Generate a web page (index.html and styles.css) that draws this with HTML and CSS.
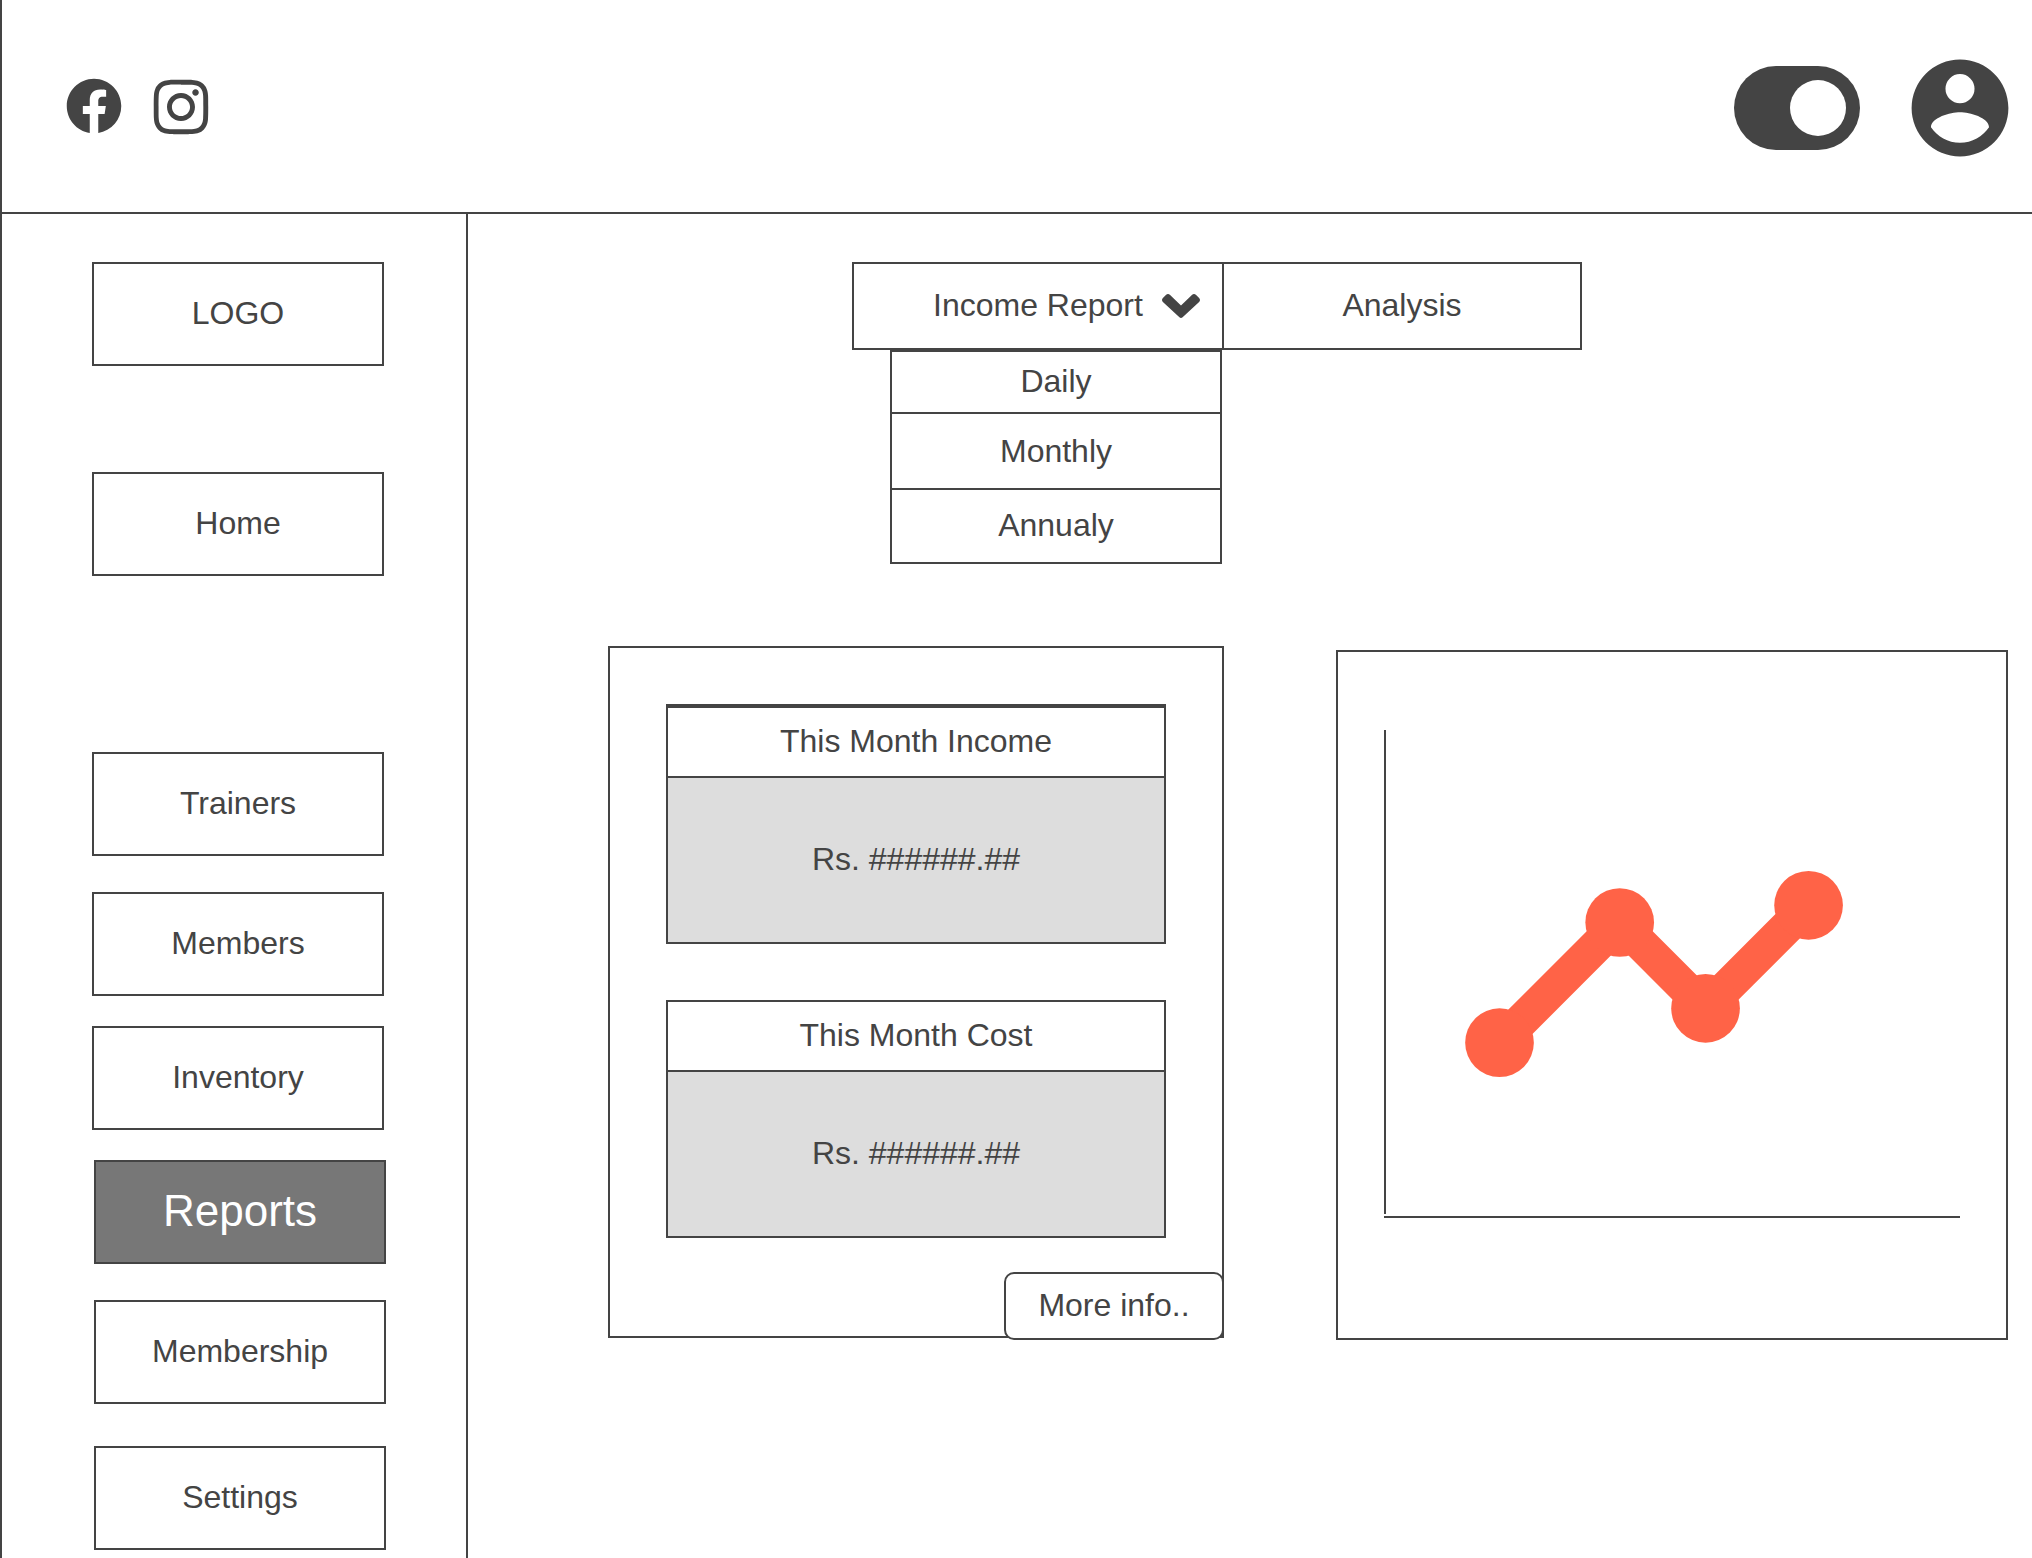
FILE: index.html
```html
<!DOCTYPE html>
<html lang="en">
<head>
<meta charset="utf-8">
<title>Reports</title>
<link rel="stylesheet" href="styles.css">
</head>
<body>
<div class="app">
  <header class="topbar">
    <div class="social">
      <svg class="icon-facebook" viewBox="1.72 1.78 20.55 20.55"><path d="M12 2.04C6.5 2.04 2 6.53 2 12.06C2 17.06 5.66 21.21 10.44 21.96V14.96H7.9V12.06H10.44V9.85C10.44 7.34 11.93 5.96 14.22 5.96C15.31 5.96 16.45 6.15 16.45 6.15V8.62H15.19C13.95 8.62 13.56 9.39 13.56 10.18V12.06H16.34L15.89 14.96H13.56V21.96A10 10 0 0 0 22 12.06C22 6.53 17.5 2.04 12 2.04Z"/></svg>
      <svg class="icon-instagram" viewBox="-0.33 -0.33 24.67 24.67"><path d="M12 0C8.74 0 8.333.015 7.053.072 5.775.132 4.905.333 4.14.63c-.789.306-1.459.717-2.126 1.384S.935 3.35.63 4.14C.333 4.905.131 5.775.072 7.053.012 8.333 0 8.74 0 12s.015 3.667.072 4.947c.06 1.277.261 2.148.558 2.913.306.788.717 1.459 1.384 2.126.667.666 1.336 1.079 2.126 1.384.766.296 1.636.499 2.913.558C8.333 23.988 8.74 24 12 24s3.667-.015 4.947-.072c1.277-.06 2.148-.262 2.913-.558.788-.306 1.459-.718 2.126-1.384.666-.667 1.079-1.335 1.384-2.126.296-.765.499-1.636.558-2.913.06-1.28.072-1.687.072-4.947s-.015-3.667-.072-4.947c-.06-1.277-.262-2.149-.558-2.913-.306-.789-.718-1.459-1.384-2.126C21.319 1.347 20.651.935 19.86.63c-.765-.297-1.636-.499-2.913-.558C15.667.012 15.26 0 12 0zm0 2.16c3.203 0 3.585.016 4.85.071 1.17.055 1.805.249 2.227.415.562.217.96.477 1.382.896.419.42.679.819.896 1.381.164.422.36 1.057.413 2.227.057 1.266.07 1.646.07 4.85s-.015 3.585-.074 4.85c-.061 1.17-.256 1.805-.421 2.227-.224.562-.479.96-.899 1.382-.419.419-.824.679-1.38.896-.42.164-1.065.36-2.235.413-1.274.057-1.649.07-4.859.07-3.211 0-3.586-.015-4.859-.074-1.171-.061-1.816-.256-2.236-.421-.569-.224-.96-.479-1.379-.899-.421-.419-.69-.824-.9-1.38-.165-.42-.359-1.065-.42-2.235-.045-1.26-.061-1.649-.061-4.844 0-3.196.016-3.586.061-4.861.061-1.17.255-1.814.42-2.234.21-.57.479-.96.9-1.381.419-.419.81-.689 1.379-.898.42-.166 1.051-.361 2.221-.421 1.275-.045 1.65-.06 4.859-.06l.045.03zm0 3.678c-3.405 0-6.162 2.76-6.162 6.162 0 3.405 2.76 6.162 6.162 6.162 3.405 0 6.162-2.76 6.162-6.162 0-3.405-2.76-6.162-6.162-6.162zM12 16c-2.21 0-4-1.79-4-4s1.79-4 4-4 4 1.79 4 4-1.79 4-4 4zm7.846-10.405c0 .795-.646 1.44-1.44 1.44-.795 0-1.44-.646-1.44-1.44 0-.794.646-1.439 1.44-1.439.793-.001 1.44.645 1.44 1.439z"/></svg>
    </div>
    <div class="account">
      <div class="toggle"><div class="knob"></div></div>
      <svg class="icon-account" viewBox="1.875 1.875 20.25 20.25"><path d="M12,19.2C9.5,19.2 7.29,17.92 6,16C6.03,14 10,12.9 12,12.9C14,12.9 17.97,14 18,16C16.71,17.92 14.5,19.2 12,19.2M12,5A3,3 0 0,1 15,8A3,3 0 0,1 12,11A3,3 0 0,1 9,8A3,3 0 0,1 12,5M12,2A10,10 0 0,0 2,12A10,10 0 0,0 12,22A10,10 0 0,0 22,12C22,6.47 17.5,2 12,2Z"/></svg>
    </div>
  </header>
  <div class="body">
    <nav class="sidebar">
      <a class="item logo">LOGO</a>
      <a class="item home">Home</a>
      <a class="item trainers">Trainers</a>
      <a class="item members">Members</a>
      <a class="item inventory">Inventory</a>
      <a class="item shifted reports">Reports</a>
      <a class="item shifted membership">Membership</a>
      <a class="item shifted settings">Settings</a>
    </nav>
    <main class="content">
      <div class="tabs">
        <div class="tab income">Income Report
          <svg class="chevron" viewBox="0 0 38 24"><path d="M19 11.6L8.1 1Q6-.9 3.9 1L.9 4Q-.9 6 .9 8L17.4 23.2Q19 24.6 20.6 23.2L37.1 8Q38.9 6 37.1 4L34.1 1Q32-.9 29.9 1Z"/></svg>
        </div>
        <div class="tab analysis">Analysis</div>
      </div>
      <div class="dropdown">
        <div class="option daily">Daily</div>
        <div class="option monthly">Monthly</div>
        <div class="option annual">Annualy</div>
      </div>
      <div class="panels">
        <section class="summary">
          <div class="stat first">
            <div class="stat-title">This Month Income</div>
            <div class="stat-value">Rs. ######.##</div>
          </div>
          <div class="stat">
            <div class="stat-title">This Month Cost</div>
            <div class="stat-value">Rs. ######.##</div>
          </div>
          <button class="more">More info..</button>
        </section>
        <section class="chart">
          <svg class="plot" viewBox="0 0 668 686">
            <path class="axis" d="M47 78V562M46 565H622"/>
            <g transform="translate(110 81.6) scale(17.17)">
              <path class="trend" d="M3 18L10 11L15 16L21 10"/>
              <circle cx="3" cy="18" r="2"/>
              <circle cx="10" cy="11" r="2"/>
              <circle cx="15" cy="16" r="2"/>
              <circle cx="21" cy="10" r="2"/>
            </g>
          </svg>
        </section>
      </div>
    </main>
  </div>
</div>
</body>
</html>
```
FILE: styles.css
```css
* {
  box-sizing: border-box;
}

body {
  margin: 0;
  background: #fff;
  color: #444;
  font: 32px/36px "Liberation Sans", Arial, sans-serif;
}

svg {
  display: block;
  fill: #444;
}

.app {
  display: flex;
  flex-direction: column;
  height: 1558px;
  overflow: hidden;
  border-left: 2px solid #444;
}

.topbar {
  display: flex;
  justify-content: space-between;
  height: 214px;
  border-bottom: 2px solid #444;
  padding: 0 23px 0 64px;
}

.social {
  display: flex;
  gap: 31px;
}

.icon-facebook {
  width: 56px;
  height: 56px;
  margin-top: 78px;
}

.icon-instagram {
  width: 56px;
  height: 56px;
  margin-top: 79px;
}

.account {
  display: flex;
  align-items: center;
  gap: 51px;
  padding-top: 4px;
}

.toggle {
  display: flex;
  align-items: center;
  justify-content: flex-end;
  width: 126px;
  height: 84px;
  padding-right: 14px;
  border-radius: 42px;
  background: #444;
}

.knob {
  width: 56px;
  height: 56px;
  border-radius: 50%;
  background: #fff;
}

.icon-account {
  width: 98px;
  height: 98px;
}

.body {
  display: flex;
  flex: 1;
}

.sidebar {
  width: 466px;
  border-right: 2px solid #444;
  padding: 48px 0 0 90px;
}

.item {
  display: flex;
  align-items: center;
  justify-content: center;
  width: 292px;
  height: 104px;
  padding-bottom: 2px;
  border: 2px solid #444;
}

.shifted {
  margin-left: 2px;
}

.home {
  margin-top: 106px;
}

.trainers {
  margin-top: 176px;
}

.members {
  margin-top: 36px;
}

.inventory,
.reports {
  margin-top: 30px;
}

.reports {
  background: #777;
  color: #fff;
  font-size: 44px;
}

.membership {
  margin-top: 36px;
}

.settings {
  margin-top: 42px;
}

.content {
  flex: 1;
  padding: 48px 24px 0 140px;
}

.tabs {
  display: flex;
  margin-left: 244px;
}

.tab {
  display: flex;
  align-items: center;
  height: 88px;
  padding-bottom: 2px;
  border: 2px solid #444;
}

.income {
  width: 372px;
  gap: 19px;
  padding-left: 79px;
}

.analysis {
  justify-content: center;
  width: 360px;
  margin-left: -2px;
}

.chevron {
  width: 38px;
  height: 24px;
  margin-top: 2px;
}

.dropdown {
  width: 332px;
  margin-left: 282px;
  border: 2px solid #444;
}

.option {
  display: flex;
  align-items: center;
  justify-content: center;
}

.option + .option {
  border-top: 2px solid #444;
}

.daily {
  height: 60px;
  padding-bottom: 2px;
}

.monthly {
  height: 76px;
}

.annual {
  height: 74px;
  padding-bottom: 2px;
}

.panels {
  display: flex;
  justify-content: space-between;
  margin-top: 82px;
}

.summary {
  display: flex;
  flex-direction: column;
  width: 616px;
  height: 692px;
  padding: 56px 56px 0;
  border: 2px solid #444;
}

.stat {
  flex: none;
  margin-bottom: 34px;
  border: 2px solid #444;
}

.stat.first {
  margin-bottom: 56px;
  border-top-width: 4px;
}

.stat-title,
.stat-value {
  display: flex;
  align-items: center;
  justify-content: center;
  padding-bottom: 2px;
}

.stat-title {
  height: 68px;
}

.stat-value {
  height: 166px;
  border-top: 2px solid #444;
  background: #ddd;
}

.more {
  flex: none;
  align-self: flex-end;
  width: 220px;
  height: 68px;
  margin-right: -58px;
  padding: 0 0 2px;
  border: 2px solid #444;
  border-radius: 10px;
  background: #fff;
  color: inherit;
  font: inherit;
}

.chart {
  width: 672px;
  height: 690px;
  margin-top: 4px;
  border: 2px solid #444;
}

.plot {
  width: 668px;
  height: 686px;
  fill: #ff6347;
}

.axis {
  fill: none;
  stroke: #444;
  stroke-width: 2;
}

.trend {
  fill: none;
  stroke: #ff6347;
  stroke-width: 2;
}
```
